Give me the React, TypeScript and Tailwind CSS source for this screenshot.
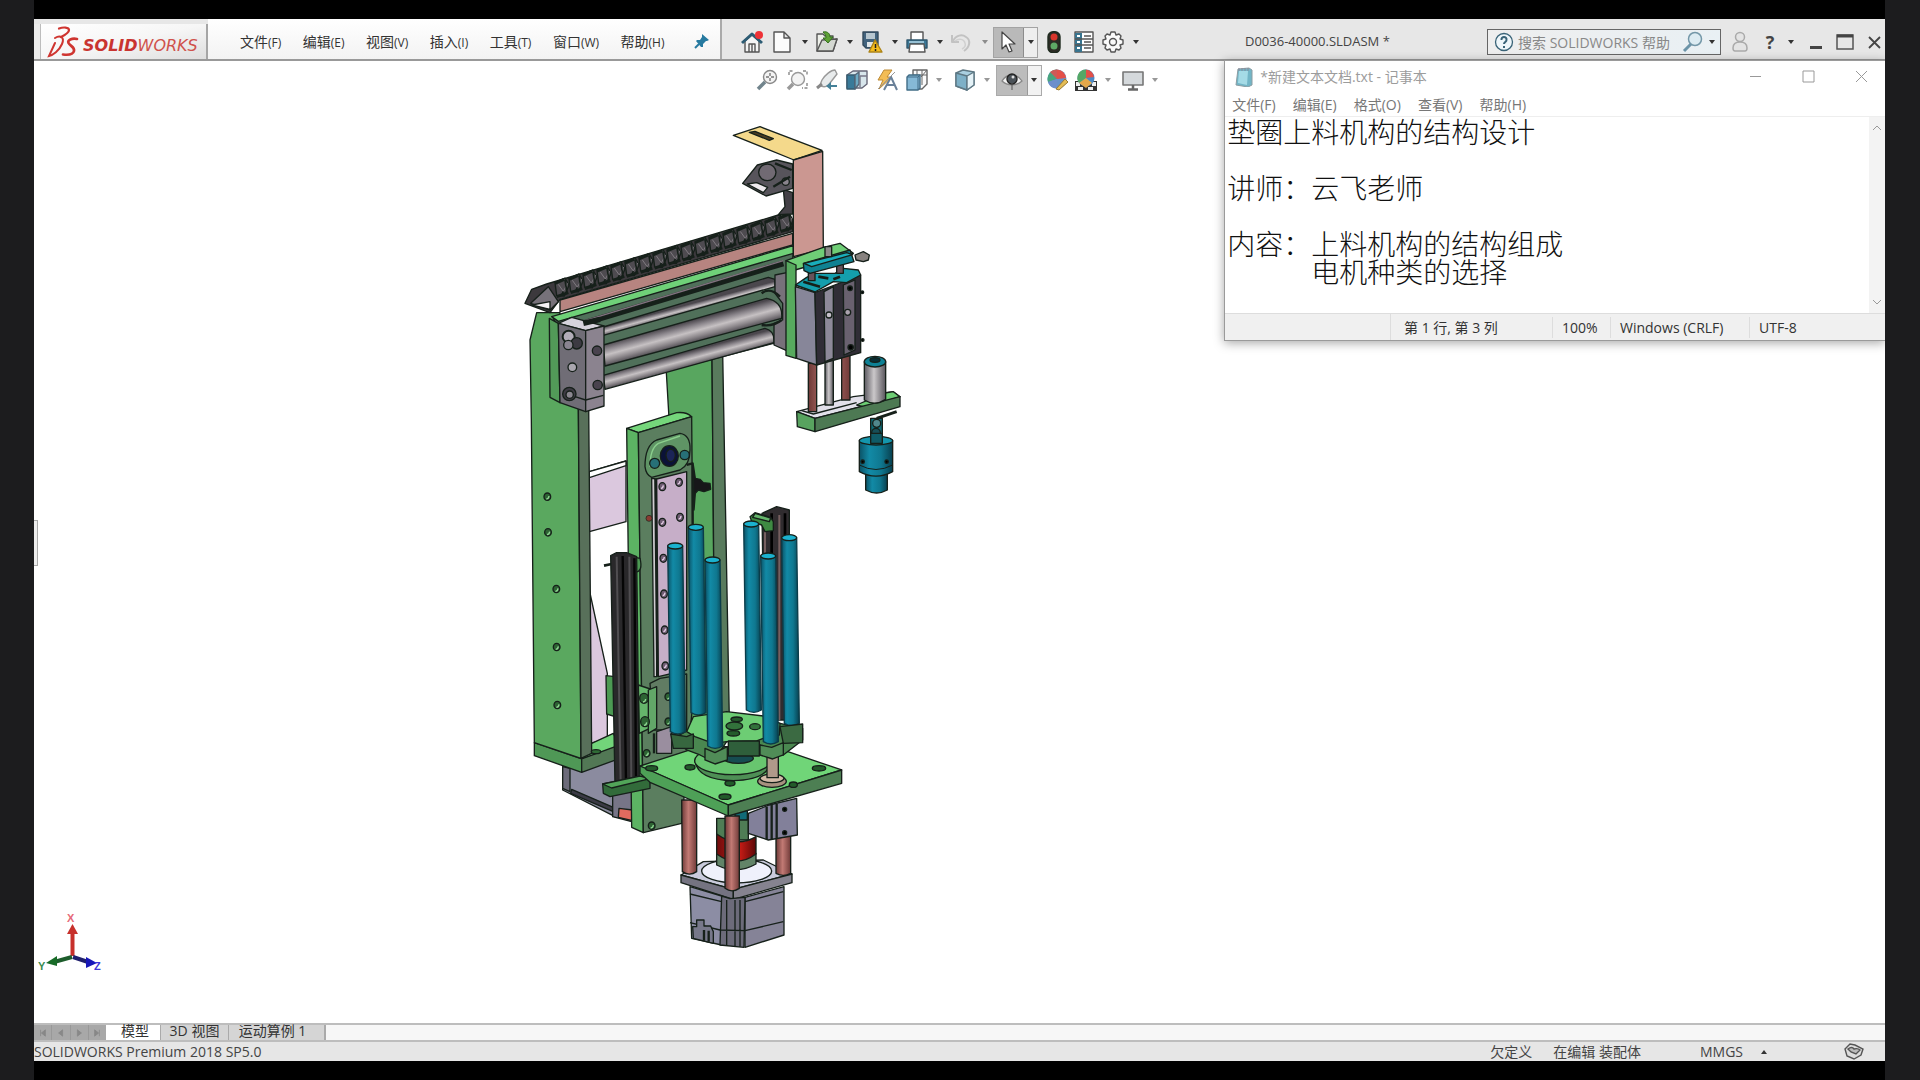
import React from "react";

const menus = [
  ["文件", "(F)"], ["编辑", "(E)"], ["视图", "(V)"], ["插入", "(I)"],
  ["工具", "(T)"], ["窗口", "(W)"], ["帮助", "(H)"],
];
const noteMenus = ["文件(F)", "编辑(E)", "格式(O)", "查看(V)", "帮助(H)"];
const noteText =
  "垫圈上料机构的结构设计\n\n讲师：云飞老师\n\n内容：上料机构的结构组成\n　　　电机种类的选择";

function Icon({ label, children }: { label: string; children: React.ReactNode }) {
  return (
    <button aria-label={label} className="shrink-0">
      <svg viewBox="0 0 22 22" className="block h-[22px] w-[22px]" fill="none" stroke="#555" strokeWidth="1.4" strokeLinejoin="round">
        {children}
      </svg>
    </button>
  );
}

function Caret({ faint }: { faint?: boolean }) {
  return (
    <button aria-label="更多" className="flex w-[23px] shrink-0 justify-center">
      <svg viewBox="0 0 6 4" className={faint ? "h-1 w-1.5 opacity-50" : "h-1 w-1.5"}>
        <path d="M0 0H6L3 4Z" fill="#333" />
      </svg>
    </button>
  );
}

function Logo() {
  return (
    <div className="flex w-[174px] shrink-0 items-stretch pt-[5px]">
      <div className="w-[7px] shrink-0 border-r border-[#bdbdbd] bg-[#ececec]" />
      <div className="flex grow items-center border-r-2 border-[#a5a5a5] bg-gradient-to-br from-white via-[#f6f6f6] to-[#dedede] pl-[6px]">
        <svg viewBox="0 0 32 32" className="mr-1 h-8 w-8 shrink-0" fill="none" stroke="#cf3530" strokeLinecap="round">
          <path d="M12 2.500C16 1 22 1 22 4 22 7 17 9.500 14 11" strokeWidth="2.200" />
          <path d="M8 12C13 9 18 11 15 18 12 25 6 29 2 30L8 17" strokeWidth="2" />
          <path d="M30 13C25 12 20 14 21.500 17 23 20 28 21 27 25 26 29 20 29 16 28.500" strokeWidth="2.700" />
        </svg>
        <span className="pt-2 font-['DejaVu_Sans',sans-serif] text-[16px] leading-none whitespace-nowrap text-[#d0524c] italic">
          <b className="text-[#c93430]">SOLID</b>WORKS
        </span>
      </div>
    </div>
  );
}

function MainTools() {
  return (
    <div className="flex shrink-0 items-center pt-[6px] pl-[19px]">
      <Icon label="主页">
        <path d="M4 10V21H18V10L11 4Z" fill="#f4f4f4" />
        <path d="M1 12 11 3 21 12" stroke="#2d5c74" strokeWidth="3" />
        <path d="M8 21V13H14V21M11 13V21" />
        <circle cx="18" cy="4" r="4" fill="#ee3237" stroke="none" />
      </Icon>
      <span className="w-2" />
      <Icon label="新建"><path d="M3 1H13L19 7V21H3ZM13 1V7H19" fill="#fcfcfc" /></Icon>
      <Caret />
      <Icon label="打开">
        <path d="M1 20V3H7L9 5H17V9L21 8 17 20Z" fill="#eef0ea" />
        <path d="M1 20 6 9 21 8 17 20Z" fill="#d4d8d2" />
        <path d="M7 1C12 0 14 3 14 6H17L12 12 7 7H10C10 4 9 3 7 1Z" fill="#5da135" stroke="#35701f" strokeWidth="1" />
      </Icon>
      <Caret />
      <Icon label="保存">
        <path d="M2 1H17V17H5L2 14Z" fill="#42637e" stroke="#334a5c" />
        <path d="M5 2H14V8H5Z" fill="#b7c6cf" stroke="none" />
        <path d="M6 11H12V16H6Z" fill="#dfe5e8" stroke="none" />
        <path d="M14 9 21 21H8Z" fill="#f5bd1d" stroke="#ad8417" />
        <path d="M14.500 13V17M14.500 18V20" stroke="#222" strokeWidth="1.500" />
      </Icon>
      <Caret />
      <Icon label="打印">
        <path d="M5 9V1H17V9" fill="#fff" />
        <path d="M1 9H21V17H1Z" fill="#3b7897" stroke="#2f576e" />
        <path d="M4 13H18L19 21H3Z" fill="#fff" />
        <path d="M3 11H18" stroke="#bfe0ee" />
      </Icon>
      <Caret />
      <Icon label="撤消">
        <path d="M1 4V11H8M2 10C5 4 11 3 15 6 20 9 19 16 13 20" stroke="#c2c2c2" strokeWidth="2" />
        <path d="M4 10C8 7 13 8 14 12 15 15 13 17 11 18" stroke="#d0d0d0" strokeWidth="1.500" />
      </Icon>
      <span className="-mr-[3px] flex"><Caret faint /></span>
      <div className="flex h-[31px] w-[45px] shrink-0 items-center border border-[#a3a3a3] bg-[#eeeeee]">
        <div className="flex h-full w-[30px] items-center justify-center border-r border-[#8c8c8c] bg-[#b9b9b9]">
          <Icon label="选择"><path d="M4 1V18L8 14 11 21 14 20 11 13H17Z" fill="#fff" stroke="#444" strokeWidth="1.200" /></Icon>
        </div>
        <span className="-mx-[5px] flex"><Caret /></span>
      </div>
      <span className="w-[5px]" />
      <Icon label="重建模型">
        <rect x="5" y="0.700" width="12" height="21" rx="5" fill="#2b2b24" stroke="#1e2a1e" />
        <circle cx="11" cy="6" r="3.500" fill="#d8362b" stroke="none" />
        <circle cx="11" cy="15" r="3.500" fill="#5ea865" stroke="none" />
      </Icon>
      <span className="w-2" />
      <Icon label="文件属性">
        <path d="M2 1H20V21H2Z" fill="#fff" />
        <path d="M2 2H9V21H2Z" fill="#38748f" stroke="none" />
        <path d="M4 5H7M4 11H7M4 17H7" stroke="#fff" strokeWidth="2" />
        <path d="M11 5H18M11 11H18M11 17H18M2 8H20M2 14H20" />
      </Icon>
      <span className="w-[7px]" />
      <Icon label="选项">
        <path d="M9 1H13L14 4 17 3 19 5 18 8 21 9V13L18 14 19 17 17 19 14 18 13 21H9L8 18 5 19 3 17 4 14 1 13V9L4 8 3 5 5 3 8 4Z" fill="#fafafa" />
        <circle cx="11" cy="11" r="3.500" />
      </Icon>
      <Caret />
    </div>
  );
}

function ViewTools() {
  return (
    <div className="absolute top-[3px] left-[39%] flex h-[32px] items-center">
      <Icon label="整屏显示全图">
        <circle cx="14" cy="8" r="6.500" fill="#f3f3f3" stroke="#888" />
        <path d="M9 13 2 20" stroke="#71848c" strokeWidth="3.500" />
        <path d="M14 4V12M10 8H18" stroke="#777" strokeDasharray="3 2" />
      </Icon>
      <span className="w-2" />
      <Icon label="局部放大">
        <circle cx="12" cy="10" r="6.500" fill="#f3f3f3" stroke="#999" />
        <path d="M7 15 2 20" stroke="#999" strokeWidth="3.500" />
        <path d="M3 6V2H8M17 2H21V6M21 14V19H16" stroke="#888" strokeDasharray="3 1.500" />
      </Icon>
      <span className="w-2" />
      <Icon label="上一视图">
        <path d="M19 1C15 1 9 6 6 11L4 16C7 19 12 18 14 14L21 5Z" fill="#e8ebec" stroke="#999" />
        <path d="M1 19 6 15" stroke="#888" strokeWidth="3" />
        <path d="M21 16H15V13L10 17 15 21V18H21Z" fill="#458198" stroke="none" />
      </Icon>
      <span className="w-2" />
      <Icon label="剖面视图">
        <path d="M1 6 7 2H21V15L16 19H1Z" fill="#d8e6ec" stroke="#667" />
        <path d="M1 6H9V20H1Z" fill="#397a99" stroke="#365c70" />
        <path d="M9 6 13 3V15L9 20Z" fill="#6fabc4" stroke="#567" />
        <path d="M14 7H21M14 7V18" stroke="#778" />
      </Icon>
      <span className="w-2" />
      <Icon label="动态注解视图">
        <path d="M8 1H16L11 8H16L3 20 7 11H2Z" fill="#f3bd55" stroke="#bd8a35" strokeWidth="1" />
        <path d="M8 21 15 8 21 21M10 16H19" stroke="#6a8199" strokeWidth="2" />
        <path d="M2 20 19 3" stroke="#999" strokeWidth="1" />
      </Icon>
      <span className="w-2" />
      <Icon label="视图定向">
        <path d="M7 1H21V15L16 20H7Z" fill="#fafafa" stroke="#666" />
        <path d="M11 1V8M16 1V16M7 6H21M21 1 15 8" stroke="#666" strokeWidth="1" />
        <path d="M1 8 3 6H14V19L12 21H1Z" fill="#86b9d6" stroke="#426d87" />
        <path d="M1 8H12V21M12 8 14 6" stroke="#426d87" strokeWidth="1" />
      </Icon>
      <Caret faint />
      <span className="w-[3px]" />
      <Icon label="显示样式">
        <path d="M2 4 9 1 20 3V16L13 21 2 17Z" fill="#a9cfe0" stroke="#5e7884" />
        <path d="M2 4 13 7V21L2 17Z" fill="#7db0c7" stroke="#5e7884" />
        <path d="M13 7 20 3V16L13 21Z" fill="#e5f2f7" stroke="#5e7884" />
      </Icon>
      <span className="-mr-[3px] flex"><Caret faint /></span>
      <div className="flex h-[31px] w-[46px] shrink-0 items-center border border-[#aaa] bg-[#f2f2f2]">
        <div className="flex h-full w-[31px] items-center justify-center border-r border-[#999] bg-[#bcbcbc]">
          <Icon label="隐藏/显示项目">
            <path d="M1 12C6 4 16 4 21 12 16 17 6 17 1 12Z" fill="#f2f2f2" stroke="#888" />
            <circle cx="11" cy="10" r="5" fill="#4b5258" stroke="#222" />
            <circle cx="12" cy="8" r="1.500" fill="#ddd" stroke="none" />
            <path d="M11 14V21" stroke="#555" strokeWidth="1" />
          </Icon>
        </div>
        <span className="-mx-[5px] flex"><Caret /></span>
      </div>
      <span className="w-1" />
      <Icon label="编辑外观">
        <circle cx="11" cy="10" r="9.500" fill="#6792c9" stroke="none" />
        <path d="M11 10V0.500A9.500 9.500 0 0 0 2 13Z" fill="#48a57f" stroke="none" />
        <path d="M11 10 2 13A9.500 9.500 0 0 0 11 19.500Z" fill="#6d8fcb" stroke="none" />
        <path d="M11 0.500A9.500 9.500 0 0 1 20 9L11 10Z" fill="#e35049" stroke="none" />
        <path d="M4 3A9.500 9.500 0 0 1 11 0.500V10Z" fill="#cf5a57" stroke="none" />
        <path d="M10 20 19 10 22 13 13 21Z" fill="#e5bd55" stroke="#997a32" strokeWidth="1" />
      </Icon>
      <span className="w-[7px]" />
      <Icon label="应用布景">
        <path d="M0 12H22V22H0Z" fill="#333" stroke="none" />
        <path d="M1 13H5V17H1ZM17 13H21V17H17ZM3 18H8V21H3ZM13 18H18V21H13Z" fill="#eee" stroke="none" />
        <circle cx="11" cy="9" r="8.500" fill="#4c8ac5" stroke="none" />
        <path d="M11 9V0.500A8.500 8.500 0 0 0 4 14Z" fill="#55a866" stroke="none" />
        <path d="M11 0.500A8.500 8.500 0 0 1 19 8L11 9Z" fill="#e35049" stroke="none" />
        <path d="M11 9 4 14 11 19 17 14Z" fill="#e5a84a" stroke="none" />
      </Icon>
      <Caret faint />
      <span className="w-[2px]" />
      <Icon label="视图设置">
        <path d="M1 3H21V16H1Z" fill="#d5d9dc" stroke="#777" strokeWidth="1.600" />
        <path d="M11 16V20M6 20.500H16" stroke="#666" strokeWidth="2.500" />
      </Icon>
      <Caret faint />
    </div>
  );
}

type Pt = { x: number; top: number; bottom: number; w?: number };
function Rod({ x, top, bottom, w = 45 }: Pt) {
  return (
    <g>
      <path d={`M${x} ${top}L${x + 8} ${bottom}Q${x + w / 2 + 8} ${bottom + 14} ${x + w + 8} ${bottom}L${x + w} ${top}Z`} fill="url(#teal)" stroke="#0b3c49" />
      <ellipse cx={x + w / 2} cy={top} rx={w / 2} ry="9" fill="#1bb2cf" />
    </g>
  );
}

function Hole({ x, y, rx = 10, ry = 11 }: { x: number; y: number; rx?: number; ry?: number }) {
  return (
    <g>
      <ellipse cx={x} cy={y} rx={rx} ry={ry} fill="#2d6333" />
      <path d={`M${x - 3} ${y + ry - 4}q7 0 8 -9`} fill="none" stroke="#8fd592" />
    </g>
  );
}

function TubeShade({ id, y, h }: { id: string; y: number; h: number }) {
  return (
    <linearGradient id={id} gradientUnits="userSpaceOnUse" x1="310" y1={y} x2={310 + h * 0.25} y2={y + h * 0.93}>
      <stop offset="0" stopColor="#4b474d" /><stop offset=".25" stopColor="#8b868c" />
      <stop offset=".5" stopColor="#c6c1c3" /><stop offset=".75" stopColor="#8e898d" /><stop offset="1" stopColor="#4e4a50" />
    </linearGradient>
  );
}

function Model() {
  const links = Array.from({ length: 17 }, (_, i) => i);
  return (
    <svg viewBox="34 61 1851 962" className="block min-h-0 w-full grow" role="img" aria-label="D0036-40000 装配体">
      <defs>
        <linearGradient id="teal">
          <stop offset="0" stopColor="#0b5266" /><stop offset=".3" stopColor="#128aa6" />
          <stop offset=".65" stopColor="#0f7890" /><stop offset="1" stopColor="#083f4e" />
        </linearGradient>
        <linearGradient id="copper">
          <stop offset="0" stopColor="#6d3937" /><stop offset=".45" stopColor="#c27a74" /><stop offset="1" stopColor="#713b39" />
        </linearGradient>
        <linearGradient id="steel">
          <stop offset="0" stopColor="#5b5960" /><stop offset=".45" stopColor="#cbc8ca" /><stop offset="1" stopColor="#58555c" />
        </linearGradient>
        <TubeShade id="tubeA" y={652} h={26} />
        <TubeShade id="tubeB" y={703} h={68} />
        <TubeShade id="tubeC" y={794} h={46} />
        <linearGradient id="red">
          <stop offset="0" stopColor="#700d0d" /><stop offset=".6" stopColor="#c31b15" /><stop offset="1" stopColor="#5b0808" />
        </linearGradient>
      </defs>
      <g transform="translate(500 110) scale(.33333)" stroke="#16201a" strokeWidth="4" strokeLinejoin="round">
        {/* rear column and brace plates */}
        <path d="M498 770 636 735 645 1830 560 1830Z" fill="#58a65f" />
        <path d="M636 735 668 728 688 1830 645 1830Z" fill="#597b5d" />
        <path d="M268 1085 378 1053V1235L268 1265Z" fill="#dbc8de" />
        <path d="M268 1085 378 1053V1067L268 1103Z" fill="#fff" />
        <path d="M268 1440 322 1690V1885L272 1900Z" fill="#dbc8de" />

        {/* side motor */}
        <path d="M188 1970 345 1940 395 2130 345 2120 188 2040Z" fill="#8b8b9f" />
        <path d="M210 1975V2045L188 2035V1970Z" fill="#6c6b7a" />
        <path d="M212 2050 340 2105V2092L215 2038Z" fill="#3b3a45" />
        <path d="M338 2020V2120L395 2135V2010Z" fill="#777587" />
        <path d="M357 2095 398 2100V2132L355 2122Z" fill="#e16b5f" />

        {/* left column */}
        <path d="M245 1947 275 1900 340 1870 360 1910Z" fill="#72d47a" />
        <path d="M103 1898 245 1947V1987L103 1937Z" fill="#4f9856" />
        <path d="M245 1947 360 1905V1945L245 1987Z" fill="#527855" />
        <path d="M110 608 90 690 94 930 103 1898 243 1945 235 880 180 700V608Z" fill="#5aa85f" />
        <path d="M235 895 266 880 275 1930 243 1945Z" fill="#58705a" />
        <Hole x={142} y={1160} /><Hole x={144} y={1267} /><Hole x={169} y={1437} />
        <Hole x={170} y={1611} /><Hole x={172} y={1785} />
        <ellipse cx="288" cy="1925" rx="14" ry="6" fill="#2f6c36" />

        {/* vertical slide */}
        <path d="M380 955 530 908Q560 905 575 920L415 968Z" fill="#75d67b" />
        <path d="M380 955 415 968 430 2168 395 2152Z" fill="#5cb363" />
        <path d="M415 968 575 920 582 1740 545 2140 430 2168Z" fill="#5b7e5f" />
        <path d="M435 1070Q435 1005 470 990L540 970Q572 975 570 1020 570 1065 540 1080L455 1102Q438 1095 435 1070Z" fill="#5f9465" />
        <path d="M450 1070Q450 1015 475 1000L540 978" fill="none" stroke="#8bcf8d" />
        <ellipse cx="508" cy="1038" rx="27" ry="31" fill="#0b1238" />
        <ellipse cx="512" cy="1036" rx="14" ry="19" fill="#1b2457" />
        <circle cx="464" cy="1060" r="15" fill="#277077" /><circle cx="554" cy="1035" r="14" fill="#277077" />
        <path d="M455 1105 470 1107V1700L462 1700Z" fill="#cfcbd0" />
        <path d="M470 1107 560 1085V1680L475 1700Z" fill="#c6aec8" />
        <path d="M466 1107 472 1700M560 1065 578 1060V1690" fill="none" strokeWidth="7" />
        {[[487, 1130], [537, 1117], [487, 1237], [540, 1222], [490, 1345], [492, 1452], [494, 1560], [496, 1668]].map(([x, y]) => (
          <g key={y}><ellipse cx={x} cy={y} rx="10" ry="12" fill="#6f5c73" /><path d={`M${x - 4} ${y + 5}q6 0 7 -9`} stroke="#e1cde3" fill="none" /></g>
        ))}
        <circle cx="447" cy="1225" r="9" fill="#893c32" strokeWidth="2" />
        <path d="M580 1065 586 1105 600 1108 610 1118 630 1120 632 1138 612 1145 595 1140 586 1150 582 1200Z" fill="#171719" />
        <path d="M415 1725 460 1740V1850L418 1870Z" fill="#65b56b" />
        <path d="M450 1720 480 1705 560 1692V1860L460 1860Z" fill="#617c63" />
        <path d="M445 1740 470 1730V1855L445 1870Z" fill="#62a768" />
        <path d="M470 1865 515 1850V1930L470 1930Z" fill="#9a8e9f" />
        <path d="M462 1870V1930" strokeWidth="7" />
        <Hole x={432} y={1765} rx={13} ry={15} /><Hole x={435} y={1835} rx={13} ry={15} />
        <Hole x={505} y={1760} /><Hole x={505} y={1835} /><Hole x={440} y={1930} /><Hole x={455} y={2147} />

        {/* cable bundles */}
        <path d="M318 1697 345 1700V1820L320 1812Z" fill="#4c9a53" />
        <path d="M395 1340 420 1345Q430 1385 405 1387" fill="#4c9a53" />
        <path d="M312 1367 335 1362" strokeWidth="8" />
        <path d="M332 1337 350 1328 380 1328 410 1340 418 2015 345 2025Z" fill="#29282a" />
        <path d="M350 1340 362 2020M388 1340 394 2015" stroke="#504e51" strokeWidth="6" />
        <path d="M368 1338 378 2018M403 1345 408 2010" stroke="#050505" strokeWidth="7" />
        <path d="M308 2022 420 2000 450 2005V2035L330 2060 310 2050Z" fill="#326b3a" />
        <path d="M308 2022 420 1998 450 2006 335 2034Z" fill="#52a559" />
        <path d="M786 1210 830 1190 868 1200V1830H795Z" fill="#302c2f" />
        <path d="M795 1250V1380M838 1215V1830" stroke="#765f5f" strokeWidth="6" />
        <path d="M815 1210V1400M855 1210V1360" stroke="#000" strokeWidth="8" />
        <path d="M750 1220 765 1208 812 1222 820 1235V1262L795 1265 785 1245 755 1235Z" fill="#3e8a42" />
        <path d="M765 1210 812 1224 808 1235 758 1222Z" fill="#65b56b" />

        {/* under-table drive */}
        <path d="M543 2295 610 2255 790 2250 876 2292 700 2338Z" fill="#c9cbdc" />
        <ellipse cx="710" cy="2283" rx="105" ry="36" fill="#eff1fb" />
        <path d="M543 2295 700 2338V2368L543 2318Z" fill="#747381" />
        <path d="M700 2338 876 2292V2318L700 2368Z" fill="#85838f" />
        <path d="M570 2330 665 2358V2505L575 2485Z" fill="#8c8da4" />
        <path d="M735 2362 852 2330V2475L735 2512Z" fill="#858397" />
        <path d="M665 2358 690 2366 735 2362 732 2512 660 2505Z" fill="#6c6b7a" />
        <path d="M570 2352 665 2375M735 2375 850 2345M570 2438 660 2460 735 2462 850 2435M680 2370V2505M705 2370V2510M720 2370V2510" fill="none" />
        <path d="M578 2450H590V2430H612V2448H632L640 2465V2500L580 2485Z" fill="#77788a" />
        <path d="M612 2460V2492M626 2462V2495" strokeWidth="7" />
        <path d="M650 2125H745V2190H650Z" fill="#4f7d55" /><path d="M705 2100H742V2130H705Z" fill="#116b78" />
        <path d="M650 2230V2265Q710 2295 768 2262V2230Z" fill="#628468" />
        <path d="M650 2172Q710 2215 768 2180V2232Q710 2275 650 2232Z" fill="url(#red)" />
        <path d="M545 2070H590V2285Q568 2300 547 2285Z" fill="url(#copper)" />
        <path d="M828 2160H872V2290Q850 2302 828 2290Z" fill="url(#copper)" />
        <path d="M745 2110 808 2085 890 2065 892 2175 805 2190 745 2170Z" fill="#82809a" />
        <path d="M800 2090V2188M815 2085V2188M830 2082V2186" strokeWidth="7" />
        <circle cx="854" cy="2098" r="6" /><circle cx="854" cy="2168" r="6" />

        {/* turntable */}
        <path d="M420 1968 600 1910H820L1025 1980 685 2085Z" fill="#70d578" />
        <path d="M420 1968 685 2085V2118L450 2017 420 1990Z" fill="#4ea057" />
        <path d="M685 2085 1025 1980V2020L685 2118Z" fill="#4d7f53" />
        <path d="M675 2118H718V2335Q696 2350 675 2335Z" fill="url(#copper)" />
        {[[455, 1975, 18], [957, 1975, 20], [675, 2060, 18], [570, 1972, 15], [690, 2020, 15], [880, 2024, 12]].map(([x, y, r]) => (
          <ellipse key={x} cx={x} cy={y} rx={r} ry="8" fill="#225b2a" />
        ))}
        <Rod x={565} top={1252} bottom={1808} />
        <Rod x={731} top={1242} bottom={1800} />
        <path d="M585 1950Q590 2010 700 2012 810 2010 812 1950Z" fill="#4e8f55" />
        <ellipse cx="698" cy="1952" rx="114" ry="42" fill="#68c56f" />
        <ellipse cx="715" cy="1945" rx="45" ry="15" fill="#164c51" />
        <path d="M520 1885 560 1920 600 1935 640 1955 680 1895 770 1895 800 1925 850 1935 908 1890V1855L840 1840 585 1850Z" fill="#4a8750" />
        <path d="M560 1865 580 1820 680 1805 790 1818 840 1840 838 1875 790 1885 770 1893 680 1895 640 1900 585 1880Z" fill="#6dcd74" />
        <path d="M685 1893H778V1938H685Z" fill="#2f5f3b" />
        <ellipse cx="703" cy="1848" rx="25" ry="12" fill="#32713b" />
        <ellipse cx="710" cy="1828" rx="17" ry="7" fill="#245b2c" /><ellipse cx="765" cy="1850" rx="16" ry="9" fill="#32713b" />
        <ellipse cx="700" cy="1870" rx="19" ry="8" fill="#245b2c" />
        <Rod x={503} top={1308} bottom={1865} /><Rod x={845} top={1283} bottom={1840} />
        <path d="M512 1872 560 1880 580 1872V1915L520 1915Z" fill="#37673f" />
        <path d="M840 1850 908 1842V1898L850 1900Z" fill="#3b6a42" />
        <ellipse cx="816" cy="2014" rx="43" ry="18" fill="#a8917f" /><ellipse cx="816" cy="2005" rx="36" ry="13" fill="#d2baa8" />
        <path d="M801 1930H835V2003H801Z" fill="#b0998a" />
        <Rod x={615} top={1350} bottom={1908} /><Rod x={782} top={1338} bottom={1895} />
        <path d="M615 1915 645 1928 682 1910V1950L645 1962 615 1950Z" fill="#508c57" />
        <path d="M780 1905 815 1912 850 1898V1935L818 1947 780 1935Z" fill="#508c57" />

        {/* horizontal axis */}
        <path d="M160 625 880 425 858 690 320 830 250 800Z" fill="#50705a" />
        <path d="M155 620 880 407V430L175 634Z" fill="#6fd178" />
        <path d="M250 640 850 460" strokeWidth="18" /><path d="M255 632 850 452" stroke="#81727f" strokeWidth="4" />
        <path d="M300 654 805 502 825 508V530L310 676Z" fill="url(#tubeA)" />
        <path d="M310 705 800 565Q850 575 845 625L315 768Z" fill="url(#tubeB)" />
        <path d="M310 796 795 655Q825 662 822 698L315 838Z" fill="url(#tubeC)" />
        <path d="M825 495 860 488V722L822 705V640L848 630V580L825 550Z" fill="#77717a" />
        <path d="M785 550Q810 530 840 560M785 645Q820 650 845 630" fill="none" strokeWidth="7" />
        <path d="M148 625 175 640 180 878 150 862Z" fill="#529a58" />
        <path d="M175 640 215 622 312 648 257 662Z" fill="#d6d3dc" />
        <path d="M175 640 257 662V905L180 878Z" fill="#706d76" />
        <path d="M257 662 312 648V888L257 905Z" fill="#8b838f" />
        <path d="M250 640 300 628" strokeWidth="16" />
        <path d="M225 860 257 870 310 856" fill="none" />
        <circle cx="206" cy="680" r="18" fill="#b2adb8" strokeWidth="6" /><circle cx="230" cy="700" r="17" fill="#3c3a42" /><circle cx="205" cy="705" r="14" fill="#898490" />
        <circle cx="217" cy="772" r="13" fill="#a9a6ae" /><circle cx="208" cy="852" r="20" fill="#3d3b43" /><circle cx="209" cy="854" r="11" fill="#8b8790" />
        <circle cx="291" cy="722" r="14" fill="#49434e" /><circle cx="293" cy="825" r="14" fill="#49434e" />
        <path d="M180 570 878 370V405L180 605Z" fill="#b78480" />

        {/* cable chain */}
        <path d="M75 580 95 538 140 522 835 315 878 330V365L180 568 150 608Z" fill="#3c393d" />
        <path d="M92 580 145 530 175 575 150 600Z" fill="#77727a" /><path d="M95 585 150 575 150 598Z" fill="#f4f2f4" />
        {links.map((i) => (
          <g key={i} transform={`translate(${165 + i * 42} ${518 - i * 12.2})`}>
            <path d="M0 0 30 -14 42 8 28 40 5 38Z" fill="#4e4b50" />
            <path d="M10 5 25 26 38 2" fill="none" stroke="#7f7a81" strokeWidth="3" />
            <path d="M25 26 20 38M30 -8 36 30" fill="none" strokeWidth="5" />
            <path d="M0 2 28 -10M5 42 40 30" strokeWidth="9" />
          </g>
        ))}
        <path d="M850 238 878 248V312L835 314 855 290Z" fill="#434046" />
        <path d="M728 220 772 165 830 150 878 162V235L798 258Z" fill="#57545b" />
        <path d="M742 222 770 218 803 232 790 248Z" fill="#eeeaee" />
        <ellipse cx="802" cy="187" rx="26" ry="25" fill="#716a73" /><circle cx="857" cy="215" r="11" fill="#8a848d" />
        <path d="M825 160 875 180M820 230 870 200" strokeWidth="7" />
        <path d="M700 76 780 50 966 121 882 150Z" fill="#f4d98b" />
        <path d="M748 67 765 64 820 86 808 91Z" fill="#4b3d22" />
        <path d="M880 150 968 124 970 417 880 440Z" fill="#cb9791" />

        {/* vertical cylinder and gripper */}
        <path d="M858 452 970 412 1020 400 1060 430 885 480Z" fill="#6fce76" />
        <path d="M858 452 888 465V745L858 736Z" fill="#57aa5e" />
        <path d="M890 905 1060 860 1180 845 1200 860 945 925Z" fill="#e2e0ea" />
        <path d="M925 760H950V905H925ZM1025 730H1050V870H1025Z" fill="url(#copper)" />
        <path d="M975 750H1000V885H975Z" fill="url(#steel)" />
        <path d="M1070 885 1150 850 1180 845 1200 860 1100 893Z" fill="#6ccc73" />
        <path d="M890 905 945 925V965L892 950Z" fill="#58a35f" />
        <path d="M945 925 1200 860V890L945 965Z" fill="#4d7953" />
        <path d="M905 902 940 912 1070 878" fill="none" />
        <path d="M1093 755V870Q1125 890 1157 868V755Z" fill="url(#steel)" />
        <ellipse cx="1125" cy="755" rx="32" ry="16" fill="#0e8195" /><ellipse cx="1125" cy="750" rx="15" ry="7" fill="#082f36" />
        <path d="M1130 925 1190 905" strokeWidth="9" />
        <path d="M1112 925H1147V1000H1112Z" fill="#0f6b77" /><circle cx="1130" cy="940" r="12" fill="#51878c" /><circle cx="1128" cy="968" r="13" fill="#174e57" />
        <path d="M1097 1085H1162V1140Q1130 1158 1097 1140Z" fill="url(#teal)" />
        <path d="M1078 992V1085Q1128 1112 1178 1085V992Z" fill="url(#teal)" />
        <path d="M1078 1065Q1128 1092 1178 1065" fill="none" strokeWidth="3" />
        <ellipse cx="1128" cy="992" rx="50" ry="13" fill="#1496ad" /><path d="M1112 970H1147V1000H1112Z" fill="#0f5b67" />
        <circle cx="1088" cy="1055" r="5" /><circle cx="1160" cy="1055" r="5" />
        <path d="M886 530 945 548 950 765 890 745Z" fill="#878699" />
        <path d="M945 548 1082 495V728L950 765Z" fill="#302d36" />
        <path d="M972 545 1000 530V745L975 755Z" fill="#8d8999" /><path d="M1030 525 1065 510V720L1032 735Z" fill="#69616f" />
        <circle cx="987" cy="615" r="9" fill="#c6c1cb" /><circle cx="1043" cy="607" r="9" fill="#aaa2ae" /><circle cx="1050" cy="535" r="7" /><circle cx="1052" cy="712" r="8" />
        <circle cx="1087" cy="547" r="4" /><circle cx="1088" cy="690" r="4" />
        <path d="M886 525 920 502 945 490 1005 490 1030 475 1075 480 1082 495 1040 518 1000 515 945 546Z" fill="#149eac" />
        <path d="M1000 508 1020 500M910 515 960 530M955 500 985 505" strokeWidth="8" />
        <path d="M925 485H945V512H925ZM1010 465 1030 462V490H1010Z" fill="#68535b" />
        <path d="M910 460 1050 420 1062 455 930 490 912 482Z" fill="#0f8292" />
        <path d="M912 460 1040 428 1058 434 935 470Z" fill="#19adbb" />
        <path d="M975 410H995V440H975Z" fill="#8b8a88" />
        <path d="M1065 435 1090 425 1108 435 1105 450 1090 455 1068 450Z" fill="#87827f" />
      </g>
      {/* origin triad */}
      <g strokeWidth="4" stroke="#c7302b" fill="none">
        <path d="M72.500 956V932" /><path d="M67 934 72.500 924 78 934Z" fill="#c7302b" stroke="none" />
        <path d="M72 957 54 962" stroke="#1d5d2c" /><path d="M57 956 46 963 57 966Z" fill="#176b27" stroke="none" />
        <path d="M73 957 88 962" stroke="#20206e" /><path d="M86 957 97 963 86 968Z" fill="#1717b8" stroke="none" />
      </g>
      <g fontFamily="Liberation Sans" fontSize="11" fontWeight="bold">
        <text x="67" y="922" fill="#e66a78">X</text><text x="38" y="970" fill="#3b8c50">Y</text><text x="94" y="970" fill="#3d37d8">Z</text>
      </g>
    </svg>
  );
}

function Notepad() {
  return (
    <section aria-label="记事本" className="absolute top-[41px] right-0 flex h-[281px] w-[35.700%] flex-col border border-r-0 border-[#9a9a9a] bg-white shadow-[0_2px_10px_rgba(0,0,0,0.35)]">
      <header className="flex h-[31px] shrink-0 items-center pr-[17px] pl-[10px] text-[14px] text-[#9c9c9c]">
        <svg viewBox="0 0 18 20" className="mr-[7px] h-5 w-[18px]">
          <path d="M3 2 14 1 17 3V18L13 20 1 18Z" fill="#72b5c6" stroke="#8b9ca2" />
          <path d="M4 4 13 4 12 18 3 16Z" fill="#a5dbe6" /><path d="M4 1V4M7 1V4M10 1V4M13 1V4" stroke="#889" />
        </svg>
        <h2 className="grow">*新建文本文档.txt - 记事本</h2>
        <div className="flex gap-10">
          <button aria-label="最小化"><svg viewBox="0 0 13 13" className="size-[13px]"><path d="M1 6.500H12" stroke="#999" /></svg></button>
          <button aria-label="最大化"><svg viewBox="0 0 13 13" className="size-[13px]"><path d="M1 1H12V12H1Z" fill="none" stroke="#999" /></svg></button>
          <button aria-label="关闭"><svg viewBox="0 0 13 13" className="size-[13px]"><path d="M1 1 12 12M12 1 1 12" stroke="#999" /></svg></button>
        </div>
      </header>
      <nav className="flex h-[24px] shrink-0 items-center gap-[17px] pl-[7px] text-[14px] text-[#777]">
        {noteMenus.map((m) => <button key={m} className="whitespace-nowrap">{m}</button>)}
      </nav>
      <div className="flex min-h-0 grow border-t border-[#eee]">
        <textarea aria-label="文本" defaultValue={noteText} spellCheck={false} className="h-full min-w-0 grow resize-none overflow-hidden pl-[2px] font-['Noto_Sans_CJK_SC',sans-serif] text-[28px] leading-[28px] font-light text-[#111] outline-none" />
        <div className="flex w-4 shrink-0 flex-col items-center justify-between bg-[#f3f3f3] py-2">
          <svg viewBox="0 0 8 5" className="h-[5px] w-2"><path d="M0 5 4 1 8 5" fill="none" stroke="#999" /></svg>
          <svg viewBox="0 0 8 5" className="h-[5px] w-2"><path d="M0 0 4 4 8 0" fill="none" stroke="#999" /></svg>
        </div>
      </div>
      <footer className="flex h-[27px] shrink-0 items-center border-t border-[#ddd] bg-[#f0f0f0] text-[14px] whitespace-nowrap text-[#333]">
        <span className="h-full min-w-0 grow border-r border-[#ddd]" />
        <span className="w-[162px] border-r border-[#ddd] pl-[13px]">第 1 行, 第 3 列</span>
        <span className="w-[58px] border-r border-[#ddd] pl-[9px]">100%</span>
        <span className="w-[139px] border-r border-[#ddd] pl-[9px]">Windows (CRLF)</span>
        <span className="w-[135px] pl-[9px]">UTF-8</span>
      </footer>
    </section>
  );
}

export default function App() {
  return (
    <div className="h-screen bg-[#1c1c1e] pr-[35px] pl-[34px] font-['Open_Sans','Noto_Sans_CJK_SC',sans-serif]">
      <div className="h-full bg-black py-[19px]">
        <main className="relative flex h-full flex-col overflow-hidden bg-white">
          <header className="flex h-[42px] shrink-0 border-b-2 border-[#999] bg-[#e7e7e7]">
            <Logo />
            <nav className="flex w-[514px] shrink-0 items-center justify-between border-r-2 border-[#aaa] bg-gradient-to-b from-white to-[#f3f3f3] pt-1 pr-[10px] pl-[32px] text-[#333]">
              {menus.map(([name, key]) => (
                <button key={name} className="text-[14px] whitespace-nowrap">{name}<span className="text-[12px]">{key}</span></button>
              ))}
              <button aria-label="固定菜单" className="ml-2">
                <svg viewBox="0 0 16 16" className="h-4 w-4"><path d="M8 1 15 7 13 8 12 8 9 11 9 14 7 14 2 8 3 7 6 7 8 4Z" fill="#277aa0" /><path d="M5 11 1 15" stroke="#277aa0" strokeWidth="2" /></svg>
              </button>
            </nav>
            <MainTools />
            <div className="flex min-w-0 grow items-center pt-[6px] pr-1">
              <h1 className="grow pl-[98px] text-[13px] whitespace-nowrap text-[#444]">D0036-40000.SLDASM *</h1>
              <label className="flex h-[26px] w-[234px] shrink-0 items-center border border-[#666] bg-gradient-to-r from-[#eee] to-[#e9f0f4] pl-[6px]">
                <svg viewBox="0 0 20 20" className="h-5 w-5 shrink-0"><circle cx="10" cy="10" r="8.500" fill="#eef6fa" stroke="#396377" strokeWidth="1.300" /><path d="M7.500 8C7 4 13 4 12.500 8 12.500 10 10 10 10 12M10 14V16" fill="none" stroke="#396377" strokeWidth="2" /></svg>
                <input aria-label="搜索 SOLIDWORKS 帮助" placeholder="搜索 SOLIDWORKS 帮助" className="ml-1 min-w-0 grow bg-transparent text-[14px] outline-none placeholder:text-[#888]" />
                <svg viewBox="0 0 22 22" className="h-[22px] w-[22px] shrink-0"><circle cx="13" cy="8" r="6.500" fill="#dcebf2" stroke="#7397a8" strokeWidth="1.500" /><path d="M9 13 2 20" stroke="#6c94a8" strokeWidth="3" /></svg>
                <svg viewBox="0 0 6 4" className="mx-[5px] h-1 w-1.5 shrink-0"><path d="M0 0H6L3 4Z" fill="#333" /></svg>
              </label>
              <button aria-label="登录" className="ml-[11px]"><svg viewBox="0 0 16 22" className="h-[22px] w-4" fill="#e4e4e4" stroke="#aaa" strokeWidth="1.500"><circle cx="8" cy="6" r="4.500" /><path d="M3 20Q1 20 1 17 1 11 8 11 15 11 15 17 15 20 13 20Z" /></svg></button>
              <button aria-label="帮助" className="ml-4 w-3 text-[18px] leading-none font-bold text-[#444]">?</button>
              <span className="ml-[3px] flex"><Caret /></span>
              <button aria-label="最小化" className="ml-[7px]"><svg viewBox="0 0 14 18" className="h-[18px] w-[14px]"><path d="M1 14.500H13" stroke="#444" strokeWidth="3" /></svg></button>
              <button aria-label="最大化" className="ml-[13px]"><svg viewBox="0 0 18 16" className="h-4 w-[18px]"><path d="M1 1H17V15H1Z" fill="none" stroke="#555" strokeWidth="1.500" /><path d="M1 2H17" stroke="#444" strokeWidth="3" /></svg></button>
              <button aria-label="关闭" className="ml-[14px]"><svg viewBox="0 0 13 13" className="size-[13px]"><path d="M1 1 12 12M12 1 1 12" stroke="#444" strokeWidth="1.800" /></svg></button>
            </div>
          </header>

          <section className="relative flex min-h-0 grow flex-col">
            <Model />
            <ViewTools />
            <button aria-label="展开设计树" className="absolute top-[459px] left-0 h-[46px] w-1 border border-l-0 border-[#aaa] bg-[#eee]" />
          </section>

          <div className="flex h-[19px] shrink-0 border-y-2 border-[#bdbdbd] bg-[#f7f7f7] text-[14px] leading-[12px] text-[#333]">
            <div className="flex w-[72px] shrink-0 divide-x divide-[#999] bg-[#a8a8a8]">
              {["M8 1 3 5 8 9ZM2 1V9", "M7 1 2 5 7 9Z", "M3 1 8 5 3 9Z", "M2 1 7 5 2 9ZM8 1V9"].map((d) => (
                <button key={d} aria-label="翻页" className="flex grow items-center justify-center">
                  <svg viewBox="0 0 10 10" className="h-2 w-2"><path d={d} fill="#888" stroke="#888" /></svg>
                </button>
              ))}
            </div>
            <button className="w-[54px] bg-white pb-[3px] pl-1">模型</button>
            <button className="w-[69px] border-x border-[#aaa] bg-[#d5d5d5] pb-[3px]">3D 视图</button>
            <button className="w-[97px] border-r-2 border-[#aaa] bg-[#d5d5d5] pr-4 pb-[3px] pl-2 whitespace-nowrap">运动算例 1</button>
          </div>
          <footer className="flex h-[19px] shrink-0 items-center bg-[#e6e6e6] pr-[21px] text-[14px] leading-[19px] whitespace-nowrap text-[#444]">
            <span className="grow">SOLIDWORKS Premium 2018 SP5.0</span>
            <span>欠定义</span>
            <span className="ml-[21px]">在编辑 装配体</span>
            <span className="ml-[59px]">MMGS</span>
            <svg viewBox="0 0 6 4" className="ml-[18px] h-1 w-1.5"><path d="M0 4H6L3 0Z" fill="#333" /></svg>
            <svg viewBox="0 0 20 17" className="ml-[77px] h-[17px] w-5" fill="#ddd" stroke="#555" strokeWidth="1.400"><path d="M1 6 6 1 11 2 19 6 17 12 10 16 3 13Z" /><path d="M4 6Q8 3 10 6 14 5 16 7L12 11 7 9Z" fill="#bbb" /></svg>
          </footer>
          <Notepad />
        </main>
      </div>
    </div>
  );
}
